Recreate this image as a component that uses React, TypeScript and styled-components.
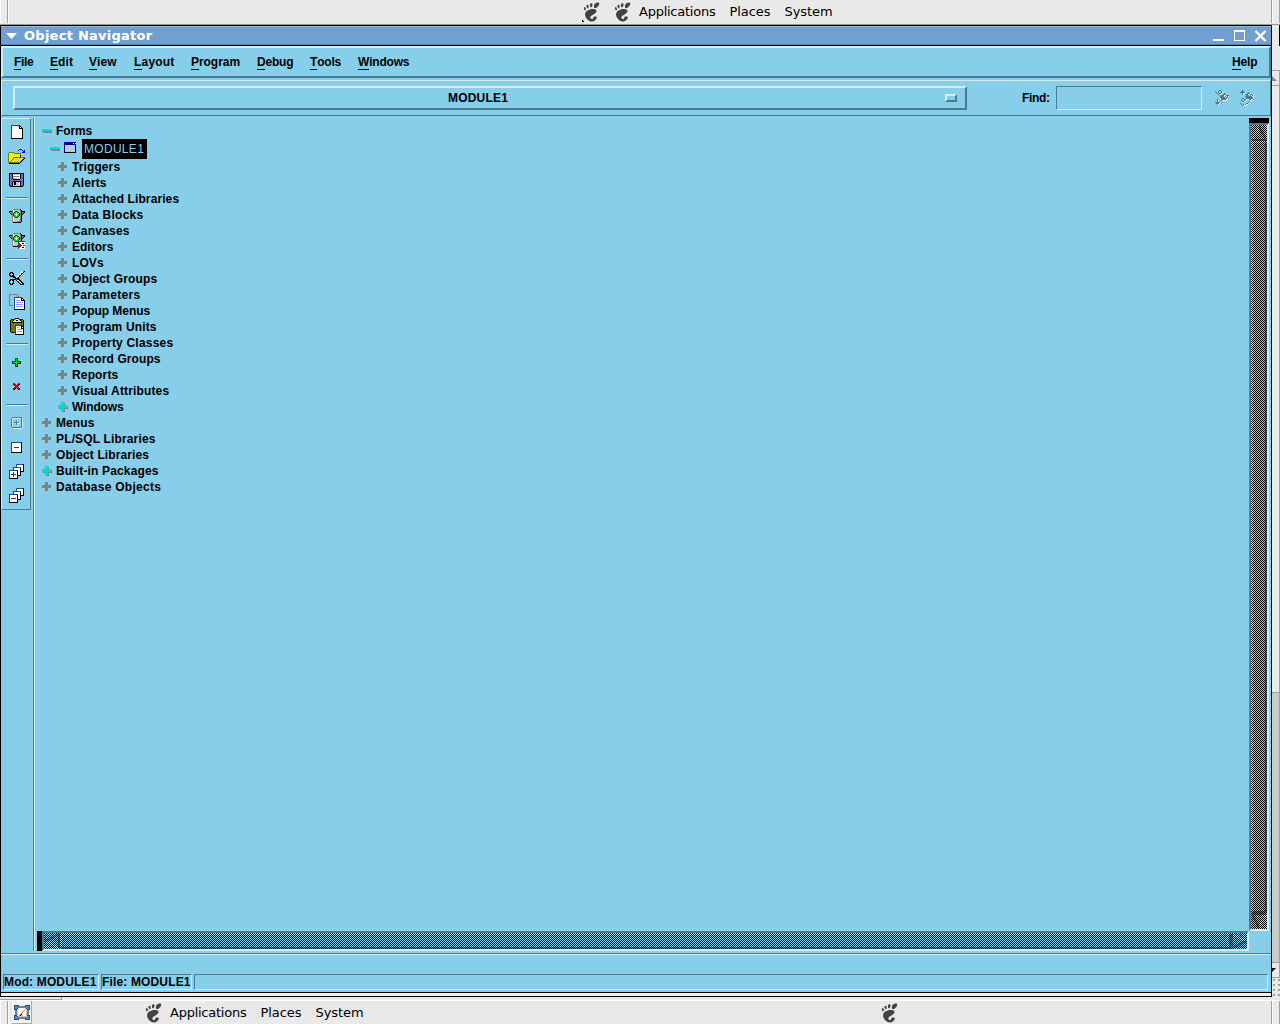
import React from "react";
import styled, { createGlobalStyle } from "styled-components";
import { SiGnome } from "react-icons/si";

const colors = {
  sky: "#87ceeb",
  light: "#d3eef9",
  dark: "#4b7b8e",
  title: "#729fcf",
  panel: "#e9e9e9",
};

const palette: Record<string, string> = {
  K: "#000000",
  W: "#ffffff",
  T: "#1c4f78",
  N: "#0000c0",
  B: "#000080",
  P: "#5c5ca4",
  p: "#8888cc",
  G: "#808080",
  g: "#c4c4cc",
  F: "#b9cbe6",
  Y: "#ffff00",
  y: "#d8d020",
  D: "#77770a",
  L: "#e0dc70",
  E: "#00e020",
  e: "#006000",
  R: "#e00000",
  r: "#700010",
  C: "#00dcdc",
  c: "#2cb0b4",
  S: colors.dark,
  H: colors.light,
  V: "#9090ff",
  U: "#5020a0",
  O: "#e08a20",
  A: "#5b86bd",
  a: "#274b85",
};

const sprites: Record<string, string[]> = {
  create: [
    "TTTTTTTTK...",
    "TWWWWWWWKK..",
    "TWWWWWWWKWK.",
    "TWWWWWWWKKKK",
    "TWWWWWWWWWWK",
    "TWWWWWWWWWWK",
    "TWWWWWWWWWWK",
    "TWWWWWWWWWWK",
    "TWWWWWWWWWWK",
    "TWWWWWWWWWWK",
    "TWWWWWWWWWWK",
    "TWWWWWWWWWWK",
    "TWWWWWWWWWWK",
    "KKKKKKKKKKKK",
  ],
  open: [
    "...........NNN...",
    "..........N...N.N",
    "...............NN",
    ".DDDDD........NNN",
    "DYYYYYDDDDDDD....",
    "DYYYyYYYyYYYD....",
    "DYyYYYyYYYyYK....",
    "DYYYyYYYyYYYK....",
    "DYyYYDDDDDDDDDDDD",
    "DYYYyDLLyLLyLLLDK",
    "DYyYDLyLLyLLyLDK.",
    "DYYDLLLyLLyLLDK..",
    "DYDLyLLLyLLLDK...",
    "DDDDDDDDDDDDK....",
    ".KKKKKKKKKKK.....",
  ],
  save: [
    "KKKKKKKKKKKKKKK",
    "KPpKggggggWKpPK",
    "KpPKWWWWWWWKPpK",
    "KPpKGGGGGGgKpPK",
    "KpPKWWWWWWWKPpK",
    "KPpKGgggggWKpPK",
    "KpPpKKKKKKKpPpK",
    "KPpPpPpPpPpPpPK",
    "KpPPKKKKKKKKPpK",
    "KPpKgKKgggWKpPK",
    "KpPKgKKgggWKPpK",
    "KPpKgKKgggWKpPK",
    "KpPKggggggWKPpK",
    ".KKKKKKKKKKKKK.",
  ],
  run: [
    "....GGGGGGGK....",
    "...GWggggggGK...",
    "KKKGWgeeeggGKKKK",
    "KGGGgeEEEegGKGGK",
    ".KGGeEEWEEeGKGK.",
    "..KGeEWWWEeGKK..",
    "...GeEEWEEeGK...",
    "...GgeEEEegGK...",
    "...GWgeeeggGK...",
    "...GWggggggGK...",
    "...GWggggggGK...",
    "...GWggggggGK...",
    "...GggggGGGGK...",
    "....KKKKKKKK....",
  ],
  debug: [
    "....GGGGGGGK....",
    "...GWggggggGK...",
    "KKKGWgeeeggGKKKK",
    "KGGGgeEEEegGKGGK",
    ".KGGeEEWEEeGKGK.",
    "..KGeEWWWEeGKK..",
    "...GeEEWEEeGK...",
    "...GgeEEEegGK...",
    "...GWgeeeTTTTTTT",
    "...GWggggTWWWWWW",
    "...GWggggTRWWKKW",
    "...GWggggTRRWWWW",
    "...GggggGTRRRWRR",
    "....KKKKKTRRWWWW",
    ".........TRWWKKW",
    ".........TWWWWWW",
  ],
  cut: [
    ".............WPK",
    ".KKK........WWK.",
    "KK.KK......WPK..",
    "K...K.....WWK...",
    "KK.KK....WPK....",
    ".KKKKK..WWK.....",
    "....KKKWPK......",
    "......KKKK......",
    ".KKKKKKPPKK.....",
    "KK.KK..KWWKK....",
    "K...K...KPWKK...",
    "K...K....KPWKK..",
    "KK.KK.....KPWKK.",
    ".KKK.......KKKK.",
  ],
  copy: [
    "GGGGGGGGG.......",
    "G.......G.......",
    "G.......GG......",
    "G....TTTTTTTT...",
    "G....TWWWWWWKK..",
    "G....TWWWWWWKWK.",
    "G....TWVVVVWKKKK",
    "G....TWWWWWWWWWK",
    "G....TWVVVVVVVWK",
    "G....TWWWWWWWWWK",
    "G....TWVVVVVVVWK",
    "GGGG.TWWWWWWWWWK",
    ".....TWVVVVVVVWK",
    ".....TWWWWWWWWWK",
    ".....TWWWWWWWWWK",
    ".....KKKKKKKKKKK",
  ],
  paste: [
    ".....KKKK.....",
    ".KKKKYWWYKKKK.",
    "KDDKYYKKYYKDDK",
    "KDKYWYYYYWYKDK",
    "KDKKKKKKKKKKDK",
    "KDDDDDDDDDDDDK",
    "KDDDDDDDDDDDDK",
    "KDDDDTTTTTTKDK",
    "KDDDDTWWWWWKKK",
    "KDDDDTWVVWWKWK",
    "KDDDDTWWWWWKKK",
    "KDDDDTWVVVVVWK",
    "KDDDDTWWWWWWWK",
    "KDDDDTWVVVVVWK",
    ".KKKKTWWWWWWWK",
    ".....TWWWWWWWK",
    ".....KKKKKKKKK",
  ],
  add: [
    "...eee...",
    "...eEe...",
    "...eEe...",
    "eeeeEeeee",
    "eEEEEEEEK",
    "eeeeEKKKK",
    "...eEK...",
    "...eEK...",
    "...eKK...",
  ],
  remove: [
    "RR...RR",
    "rRR.RRK",
    ".rRRRK.",
    "..RRR..",
    ".RRRRR.",
    "RRK.rRR",
    "rK...rK",
  ],
  expand: [
    ".SSSSSSSSSS.",
    "SHHHHHHHHHSH",
    "SH........SH",
    "SH...SH...SH",
    "SH...SH...SH",
    "SH.SSSSSH.SH",
    "SH..HSHHH.SH",
    "SH...SH...SH",
    "SH....H...SH",
    "SH........SH",
    ".SSSSSSSSSSH",
    "..HHHHHHHHH.",
  ],
  collapse: [
    "TTTTTTTTTTK",
    "TWWWWWWWWWK",
    "TWWWWWWWWWK",
    "TWWWWWWWWWK",
    "TWWWWWWWWWK",
    "TWWUUUUUWWK",
    "TWWWWWWWWWK",
    "TWWWWWWWWWK",
    "TWWWWWWWWWK",
    "TWWWWWWWWWK",
    "KKKKKKKKKKK",
  ],
  expandAll: [
    ".......TTTTTTTK",
    ".......TWWWWWWK",
    ".......TWWWWWWK",
    "....TTTTTTTTWWK",
    "....TWWWWWWKWWK",
    "....TWWWWWWKWWK",
    "TTTTTTTTTWWKWWK",
    "TWWWWWWWKWWKKKK",
    "TWWWUWWWKWWK...",
    "TWWWUWWWKWWK...",
    "TWUUUUUWKWWK...",
    "TWWWUWWWKKKK...",
    "TWWWUWWWK......",
    "TWWWWWWWK......",
    "KKKKKKKKK......",
  ],
  collapseAll: [
    ".......TTTTTTTK",
    ".......TWWWWWWK",
    ".......TWWWWWWK",
    "....TTTTTTTTWWK",
    "....TWWWWWWKWWK",
    "....TWWWWWWKWWK",
    "TTTTTTTTTWWKWWK",
    "TWWWWWWWKWWKKKK",
    "TWWWWWWWKWWK...",
    "TWWWWWWWKWWK...",
    "TWUUUUUWKWWK...",
    "TWWWWWWWKKKK...",
    "TWWWWWWWK......",
    "TWWWWWWWK......",
    "KKKKKKKKK......",
  ],
  findNext: [
    "....SS........",
    "S..S..S.......",
    ".S.S..SH......",
    "..S.SSH..S....",
    "...SHH..SSSH..",
    "....S.SSSHHSSS",
    ".....SSSSHSHSH",
    ".....SSSSSHSSH",
    ".....HSSSSSSH.",
    "..S...SSSSSHH.",
    "..SH..SHHHHH..",
    "..SH.SH.......",
    "SSSSSH.S......",
    ".SSSHHSH......",
    "..SH..........",
    "...H..........",
  ],
  findPrev: [
    "..S...........",
    ".SSS..........",
    "SSSSS...S.....",
    "..SHHH.SSSH...",
    "..SH.SSSHHSS..",
    "......SSSHSHS.",
    ".....SSSSSSSHH",
    "......SSSSSSSH",
    "..SS..SSSSSSSH",
    ".S..SSHHHSSHHS",
    ".S..SH....HH.H",
    "..SSH....SH...",
    "........SH....",
    "S.....SSH.....",
    ".S.S.SHH......",
    "..S.HHH.......",
  ],
  plus: [
    "...GGG...",
    "...GGG...",
    "...GGG...",
    "GGGGGGGGG",
    "GGGGGGGGG",
    "GGGGGGGGG",
    "...GGG...",
    "...GGG...",
    "...GGG...",
    ".........",
  ],
  plusActive: [
    "...CCC....",
    "...CCCG...",
    "...CCCG...",
    "CCCCCCCCC.",
    "CCCCCCCCCG",
    "CCCCCCCCCG",
    ".GGCCCGGGG",
    "...CCCG...",
    "...CCCG...",
    "....GGG...",
  ],
  minus: ["CCCCCCCCC.", "CCCCCCCCCG", "cccccccccG", ".GGGGGGGGG"],
  form: [
    "NNNNNNNNNNNN",
    "NNNNNNNNNWNW",
    "BBBBBBBBBBBB",
    "BFFFFFFFFFFK",
    "BFFFFFFFFFFK",
    "BFFFFFFFFFFK",
    "BFFFFFFFFFFK",
    "BFFFFFFFFFFK",
    "BFFFFFFFFFFK",
    "BFFFFFFFFFFK",
    "BKKKKKKKKKKK",
  ],
  desktop: [
    "aaaaa......aaaaa",
    "aAAAaGGGGGGaAAAa",
    "aAAAAAAAAAAAAAAa",
    "aAAagWWWWWWYaAAa",
    "aaagWWWWWWYOWaaa",
    ".GAgWWWWWYOWgAG.",
    ".GAgWWWWYOWWgAG.",
    ".GAgWWWYOWWWgAG.",
    ".GAgWWYOWWWWgAG.",
    ".GAgWYOKWWWWgAG.",
    "aaagWOKggWWWgaaa",
    "aAAagggggggggAAa",
    "aAAAAAAAAAAAAAAa",
    "aAAAaGGGGGGaAAAa",
    "aaaaa......aaaaa",
  ],
};

type SpriteProps = {
  name: string;
};

// Draws one svg cell for every pixel of the named sprite.
const Sprite: React.FunctionComponent<SpriteProps> = ({ name }) => {
  const rows = sprites[name];
  const width = Math.max(...rows.map((row) => row.length));
  return (
    <Styled.Svg
      width={width}
      height={rows.length}
      viewBox={`0 0 ${width} ${rows.length}`}
      shapeRendering="crispEdges"
    >
      {rows.map((row, y) =>
        row.split("").map((key, x) =>
          key === "." ? null : (
            <rect key={`${x}-${y}`} x={x} y={y} width={1} height={1} fill={palette[key]} />
          )
        )
      )}
    </Styled.Svg>
  );
};

type MenuEntry = { label: string; width: number; spacing?: number };

const menus: MenuEntry[] = [
  { label: "File", width: 36, spacing: -0.3 },
  { label: "Edit", width: 39 },
  { label: "View", width: 45 },
  { label: "Layout", width: 57, spacing: 0.2 },
  { label: "Program", width: 66, spacing: -0.05 },
  { label: "Debug", width: 53, spacing: -0.2 },
  { label: "Tools", width: 48, spacing: -0.2 },
  { label: "Windows", width: 60, spacing: -0.2 },
];

type Tool = { icon: string; height?: number } | { gap: [number, number] };

const tools: Tool[] = [
  { icon: "create" },
  { icon: "open" },
  { icon: "save" },
  { gap: [5, 5] },
  { icon: "run" },
  { icon: "debug", height: 26 },
  { gap: [4, 6] },
  { icon: "cut" },
  { icon: "copy" },
  { icon: "paste" },
  { gap: [5, 5] },
  { icon: "add" },
  { icon: "remove" },
  { gap: [6, 5] },
  { icon: "expand" },
  { icon: "collapse" },
  { icon: "expandAll" },
  { icon: "collapseAll" },
];

type TreeNode = { label: string; level: number; icon?: string; spacing?: number };

const nodes: TreeNode[] = [
  { label: "Triggers", level: 2 },
  { label: "Alerts", level: 2 },
  { label: "Attached Libraries", level: 2 },
  { label: "Data Blocks", level: 2, spacing: 0.25 },
  { label: "Canvases", level: 2, spacing: 0.2 },
  { label: "Editors", level: 2, spacing: 0 },
  { label: "LOVs", level: 2 },
  { label: "Object Groups", level: 2, spacing: 0.15 },
  { label: "Parameters", level: 2, spacing: 0.3 },
  { label: "Popup Menus", level: 2, spacing: -0.05 },
  { label: "Program Units", level: 2, spacing: 0.15 },
  { label: "Property Classes", level: 2, spacing: 0.2 },
  { label: "Record Groups", level: 2 },
  { label: "Reports", level: 2, spacing: 0.15 },
  { label: "Visual Attributes", level: 2, spacing: 0.15 },
  { label: "Windows", level: 2, icon: "plusActive", spacing: -0.15 },
  { label: "Menus", level: 0 },
  { label: "PL/SQL Libraries", level: 0, spacing: 0.15 },
  { label: "Object Libraries", level: 0 },
  { label: "Built-in Packages", level: 0, icon: "plusActive", spacing: 0.15 },
  { label: "Database Objects", level: 0, spacing: 0.28 },
];

const PanelMenu: React.FunctionComponent = () => (
  <Styled.PanelMenu>
    <Styled.Foot />
    <span>Applications</span>
    <span>Places</span>
    <span>System</span>
  </Styled.PanelMenu>
);

const ToolBox: React.FunctionComponent = () => (
  <Styled.ToolBox>
    {tools.map((tool, index) =>
      "gap" in tool ? (
        <Styled.ToolSeparator key={index} $before={tool.gap[0]} $after={tool.gap[1]} />
      ) : (
        <Styled.ToolButton key={index} $height={tool.height}>
          <Sprite name={tool.icon} />
        </Styled.ToolButton>
      )
    )}
  </Styled.ToolBox>
);

const Tree: React.FunctionComponent = () => (
  <Styled.Tree>
    <Styled.TreeRow $level={0} $spacing={-0.1}>
      <Styled.Toggle>
        <Sprite name="minus" />
      </Styled.Toggle>
      Forms
    </Styled.TreeRow>
    <Styled.TreeRow $level={1} $tall>
      <Styled.Toggle>
        <Sprite name="minus" />
      </Styled.Toggle>
      <Styled.FormIcon>
        <Sprite name="form" />
      </Styled.FormIcon>
      <Styled.Selected>MODULE1</Styled.Selected>
    </Styled.TreeRow>
    {nodes.map((node) => (
      <Styled.TreeRow key={node.label} $level={node.level} $spacing={node.spacing}>
        <Styled.Toggle>
          <Sprite name={node.icon || "plus"} />
        </Styled.Toggle>
        {node.label}
      </Styled.TreeRow>
    ))}
  </Styled.Tree>
);

type ArrowProps = {
  angle: number;
};

const Arrow: React.FunctionComponent<ArrowProps> = ({ angle }) => (
  <Styled.Svg width={16} height={16} viewBox="0 0 16 16">
    <g transform={`rotate(${angle} 8 8)`} fill="none" strokeWidth={2}>
      <path d="M1 15L8 1" stroke={colors.light} />
      <path d="M8 1L15 15H1" stroke={colors.dark} />
    </g>
  </Styled.Svg>
);

const App: React.FunctionComponent = () => (
  <Styled.Desktop>
    <GlobalStyle />
    <Styled.Panel $height={25} $edge>
      <Styled.Handle />
      <Styled.PanelSpace $width={573} />
      <Styled.Foot $corner />
      <Styled.PanelSpace $width={12} />
      <PanelMenu />
      <Styled.PanelEnd />
    </Styled.Panel>
    <Styled.Workspace>
      <Styled.Window>
        <Styled.TitleBar>
          <Styled.Svg width={11} height={6} viewBox="0 0 11 6">
            <path d="M0 0H11L5.5 6Z" fill="#fff" />
          </Styled.Svg>
          <Styled.Title>Object Navigator</Styled.Title>
          <Styled.Svg width={54} height={12} viewBox="0 0 54 12" shapeRendering="crispEdges">
            <path d="M0 9H11V11H0Z" fill="#fff" />
            <path d="M21 0H32V11H21ZM22 2V10H31V2Z" fill="#fff" fillRule="evenodd" />
            <path
              d="M42.5 1L52.5 11M52.5 1L42.5 11"
              stroke="#fff"
              strokeWidth={2.4}
              shapeRendering="auto"
            />
          </Styled.Svg>
        </Styled.TitleBar>
        <Styled.MenuBar>
          {menus.map((menu) => (
            <Styled.MenuItem key={menu.label} $width={menu.width} $spacing={menu.spacing}>
              <Styled.Mnemonic>{menu.label[0]}</Styled.Mnemonic>
              {menu.label.slice(1)}
            </Styled.MenuItem>
          ))}
          <Styled.HelpItem $width={26}>
            <Styled.Mnemonic>H</Styled.Mnemonic>elp
          </Styled.HelpItem>
        </Styled.MenuBar>
        <Styled.SearchBar>
          <Styled.OptionMenu>
            <Styled.OptionLabel>MODULE1</Styled.OptionLabel>
            <Styled.OptionMark />
          </Styled.OptionMenu>
          <Styled.FindLabel>Find:</Styled.FindLabel>
          <Styled.FindInput />
          <Styled.FindButtons>
            <Sprite name="findNext" />
            <Sprite name="findPrev" />
          </Styled.FindButtons>
        </Styled.SearchBar>
        <Styled.Body>
          <ToolBox />
          <Styled.Divider />
          <Styled.TreePane>
            <Tree />
            <Styled.HorizontalBar>
              <Styled.BarCap $width={5} />
              <Styled.Trough>
                <Arrow angle={-90} />
                <Styled.Thumb />
                <Arrow angle={90} />
              </Styled.Trough>
            </Styled.HorizontalBar>
          </Styled.TreePane>
          <Styled.VerticalBar>
            <Styled.BarCap $height={5} />
            <Styled.Trough $vertical>
              <Arrow angle={0} />
              <Styled.Thumb />
              <Arrow angle={180} />
            </Styled.Trough>
          </Styled.VerticalBar>
        </Styled.Body>
        <Styled.StatusBar>
          <Styled.StatusCell $width={96}>Mod: MODULE1</Styled.StatusCell>
          <Styled.StatusCell $width={91}>File: MODULE1</Styled.StatusCell>
          <Styled.StatusCell />
        </Styled.StatusBar>
        <Styled.WindowFoot />
      </Styled.Window>
      <Styled.Behind>
        <Styled.BehindTitle />
        <Styled.BehindMenu />
        <Styled.BehindArrow $height={15}>
          <svg width={7} height={5}>
            <path d="M0 0L5 5H0Z" fill="#888" />
          </svg>
        </Styled.BehindArrow>
        <Styled.BehindTrough />
        <Styled.BehindThumb />
        <Styled.BehindArrow $height={15}>
          <svg width={7} height={5}>
            <path d="M0 0H4L0 4Z" fill="#000" />
          </svg>
        </Styled.BehindArrow>
        <Styled.BehindGrip />
      </Styled.Behind>
    </Styled.Workspace>
    <Styled.BehindFoot />
    <Styled.Panel $height={24}>
      <Styled.Handle />
      <Styled.ShowDesktop>
        <Sprite name="desktop" />
      </Styled.ShowDesktop>
      <Styled.PanelSpace $width={112} />
      <PanelMenu />
      <Styled.PanelSpace $width={516} />
      <Styled.Foot />
      <Styled.PanelEnd />
    </Styled.Panel>
  </Styled.Desktop>
);

const GlobalStyle = createGlobalStyle`
  body {
    margin: 0;
    overflow: hidden;
    background: ${colors.panel};
  }
`;

const Styled = {
  Svg: styled.svg`
    display: block;
    flex: none;
  `,
  Desktop: styled.div`
    display: flex;
    flex-direction: column;
    width: 1280px;
    height: 1024px;
    overflow: hidden;
    background: ${colors.panel};
    font: bold 12px/16px "Liberation Sans", Arial, sans-serif;
    color: #000;
    white-space: nowrap;
  `,
  Panel: styled.div<{ $height: number; $edge?: boolean }>`
    display: flex;
    flex: none;
    align-items: center;
    box-sizing: border-box;
    height: ${({ $height }) => $height}px;
    padding-bottom: ${({ $edge }) => ($edge ? 1 : 0)}px;
    background: ${colors.panel};
    border-top: ${({ $edge }) => ($edge ? "none" : "1px solid #fff")};
    border-bottom: ${({ $edge }) => ($edge ? "1px solid #999990" : "none")};
  `,
  Handle: styled.div`
    align-self: stretch;
    flex: none;
    box-sizing: border-box;
    width: 9px;
    border-left: 1px solid #fff;
    border-right: 1px solid #fff;
    box-shadow: inset -1px 0 #a0a09c;
  `,
  PanelSpace: styled.div<{ $width: number }>`
    flex: none;
    width: ${({ $width }) => $width}px;
  `,
  PanelMenu: styled.div`
    display: flex;
    align-items: center;
    gap: 14px;
    font: 13px/20px "DejaVu Sans", sans-serif;
    letter-spacing: -0.25px;

    span + span {
      letter-spacing: -0.05px;
    }

    svg {
      margin-right: -7px;
    }
  `,
  Foot: styled(SiGnome)<{ $corner?: boolean }>`
    flex: none;
    width: 19px;
    height: 20px;
    color: #3f4443;
    background: ${({ $corner }) =>
      $corner ? "linear-gradient(45deg, #000 2px, transparent 2px)" : "none"};
  `,
  PanelEnd: styled.div`
    align-self: stretch;
    width: 7px;
    margin-left: auto;
    border-left: 1px solid #a0a09c;
    border-right: 1px solid #a0a09c;
    box-shadow: inset 1px 0 #fff;
  `,
  ShowDesktop: styled.div`
    display: flex;
    align-self: stretch;
    align-items: center;
    justify-content: center;
    box-sizing: border-box;
    width: 20px;
    margin-left: 3px;
    background: #f4f4f3;
    border-right: 1px solid #a8a8a4;
    border-bottom: 1px solid #a8a8a4;
  `,
  Workspace: styled.div`
    display: flex;
    flex: none;
    height: 972px;
  `,
  Window: styled.div`
    display: flex;
    flex-direction: column;
    box-sizing: border-box;
    width: 1272px;
    border: 1px solid #000;
    background: ${colors.sky};
  `,
  TitleBar: styled.div`
    display: flex;
    align-items: center;
    box-sizing: border-box;
    height: 20px;
    padding: 0 4px 0 5px;
    background: ${colors.title};
    border-top: 1px solid #94b7dc;
    border-bottom: 1px solid #000;
    box-shadow: inset 0 -1px #5b82b4;
  `,
  Title: styled.div`
    flex: 1;
    padding-left: 7px;
    font: bold 13px/18px "DejaVu Sans", sans-serif;
    letter-spacing: 0.26px;
    color: #fff;
  `,
  MenuBar: styled.div`
    display: flex;
    align-items: center;
    box-sizing: border-box;
    height: 32px;
    padding: 0 11px;
    border: 2px solid;
    border-color: ${colors.light} ${colors.dark} ${colors.dark} ${colors.light};
  `,
  MenuItem: styled.div<{ $width: number; $spacing?: number }>`
    flex: none;
    width: ${({ $width }) => $width}px;
    letter-spacing: ${({ $spacing = 0.1 }) => $spacing}px;
  `,
  HelpItem: styled.div<{ $width: number }>`
    width: ${({ $width }) => $width}px;
    margin-left: auto;
    letter-spacing: -0.15px;
  `,
  Mnemonic: styled.span`
    display: inline-block;
    height: 15px;
    border-bottom: 1px solid #000;
  `,
  SearchBar: styled.div`
    display: flex;
    align-items: center;
    box-sizing: border-box;
    height: 36px;
    margin-top: 2px;
    padding-left: 11px;
    border: 1px solid;
    border-color: ${colors.light} ${colors.dark} ${colors.dark} ${colors.light};
  `,
  OptionMenu: styled.div`
    display: flex;
    align-items: center;
    box-sizing: border-box;
    width: 954px;
    height: 24px;
    padding-right: 8px;
    border: 2px solid;
    border-color: ${colors.light} ${colors.dark} ${colors.dark} ${colors.light};
  `,
  OptionLabel: styled.div`
    flex: 1;
    padding-right: 4px;
    text-align: center;
    letter-spacing: 0.2px;
  `,
  OptionMark: styled.div`
    box-sizing: border-box;
    width: 12px;
    height: 8px;
    border: 2px solid;
    border-color: ${colors.light} ${colors.dark} ${colors.dark} ${colors.light};
  `,
  FindLabel: styled.div`
    width: 34px;
    margin-left: 55px;
    letter-spacing: -0.3px;
  `,
  FindInput: styled.div`
    box-sizing: border-box;
    width: 146px;
    height: 24px;
    border: 1px solid;
    border-color: ${colors.dark} ${colors.light} ${colors.light} ${colors.dark};
  `,
  FindButtons: styled.div`
    display: flex;
    gap: 11px;
    margin-left: 13px;
  `,
  Body: styled.div`
    display: flex;
    height: 833px;
    margin-top: 2px;
  `,
  ToolBox: styled.div`
    align-self: flex-start;
    box-sizing: border-box;
    width: 30px;
    height: 392px;
    padding-top: 1px;
    border: 1px solid;
    border-color: ${colors.light} ${colors.dark} ${colors.dark} ${colors.light};
  `,
  ToolButton: styled.div<{ $height?: number }>`
    display: flex;
    align-items: center;
    justify-content: center;
    height: ${({ $height }) => $height || 24}px;
    padding-left: 1px;
  `,
  ToolSeparator: styled.div<{ $before: number; $after: number }>`
    height: 1px;
    margin: ${({ $before, $after }) => `${$before}px 2px ${$after}px 4px`};
    background: ${colors.dark};
    border-bottom: 1px solid ${colors.light};
  `,
  Divider: styled.div`
    width: 1px;
    margin-left: 2px;
    background: ${colors.dark};
    border-right: 1px solid ${colors.light};
  `,
  TreePane: styled.div`
    display: flex;
    flex: 1;
    flex-direction: column;
    padding-left: 2px;
  `,
  Tree: styled.div`
    flex: 1;
    padding: 5px 0 0 5px;
  `,
  TreeRow: styled.div<{ $level: number; $tall?: boolean; $spacing?: number }>`
    display: flex;
    align-items: center;
    height: ${({ $tall }) => ($tall ? 20 : 16)}px;
    padding-left: ${({ $level }) => $level * 8}px;
    letter-spacing: ${({ $spacing = 0.1 }) => $spacing}px;
  `,
  Toggle: styled.div`
    width: 14px;
  `,
  FormIcon: styled.div`
    width: 18px;
    padding-bottom: 3px;
  `,
  Selected: styled.div`
    box-sizing: border-box;
    width: 65px;
    height: 20px;
    padding-left: 2px;
    line-height: 20px;
    font-weight: normal;
    letter-spacing: 0.3px;
    background: #000;
    color: ${colors.sky};
  `,
  HorizontalBar: styled.div`
    display: flex;
    height: 20px;
  `,
  VerticalBar: styled.div`
    display: flex;
    flex-direction: column;
    width: 20px;
    height: 813px;
    margin-right: 2px;
  `,
  BarCap: styled.div<{ $width?: number; $height?: number }>`
    flex: none;
    width: ${({ $width }) => ($width ? `${$width}px` : "auto")};
    height: ${({ $height }) => ($height ? `${$height}px` : "auto")};
    background: #000;
  `,
  // The stipple over the whole trough marks the scroll bar as disabled.
  Trough: styled.div<{ $vertical?: boolean }>`
    position: relative;
    display: flex;
    flex: 1;
    flex-direction: ${({ $vertical }) => ($vertical ? "column" : "row")};
    border: 2px solid;
    border-color: ${colors.dark} ${colors.light} ${colors.light} ${colors.dark};

    &::after {
      content: "";
      position: absolute;
      inset: 0;
      background: repeating-conic-gradient(#000 0 25%, transparent 0 50%) 1px 0 / 2px 2px;
    }
  `,
  Thumb: styled.div`
    flex: 1;
    border: 2px solid;
    border-color: ${colors.light} ${colors.dark} ${colors.dark} ${colors.light};
  `,
  StatusBar: styled.div`
    display: flex;
    gap: 2px;
    height: 16px;
    margin-top: 2px;
    padding: 20px 3px 2px 2px;
    border-top: 1px solid ${colors.dark};
    box-shadow: inset 0 1px ${colors.light};
  `,
  StatusCell: styled.div<{ $width?: number }>`
    flex: ${({ $width }) => ($width ? "none" : 1)};
    box-sizing: border-box;
    width: ${({ $width }) => ($width ? `${$width}px` : "auto")};
    border: 1px solid;
    border-color: ${colors.dark} ${colors.light} ${colors.light} ${colors.dark};
    line-height: 14px;
    letter-spacing: 0.15px;
  `,
  WindowFoot: styled.div`
    flex: 1;
    border-top: 1px solid #000;
    background: #eeeeec;
  `,
  Behind: styled.div`
    display: flex;
    flex: 1;
    flex-direction: column;
    background: ${colors.panel};
  `,
  BehindTitle: styled.div`
    height: 21px;
    border-right: 1px solid #000;
  `,
  BehindMenu: styled.div`
    height: 24px;
    border-bottom: 1px solid #a0a09c;
  `,
  BehindArrow: styled.div<{ $height: number }>`
    display: flex;
    align-items: center;
    box-sizing: border-box;
    height: ${({ $height }) => $height}px;
    border-right: 1px solid #a0a09c;
    border-bottom: 1px solid #a0a09c;
  `,
  BehindTrough: styled.div`
    height: 606px;
    border-right: 1px solid #a0a09c;
    border-bottom: 1px solid #a0a09c;
    background: #ebebeb;
  `,
  BehindThumb: styled.div`
    height: 269px;
    border-right: 1px solid #a0a09c;
    border-bottom: 1px solid #a0a09c;
    background: #cbcbcb;
  `,
  BehindGrip: styled.div`
    flex: 1;
    background: radial-gradient(circle at 2px 2px, #a0a09c 1px, transparent 1.5px) 0 0 / 5px 5px;
  `,
  BehindFoot: styled.div`
    flex: none;
    box-sizing: border-box;
    width: 62px;
    height: 3px;
    border-right: 1px solid #a0a09c;
    border-bottom: 1px solid #a0a09c;
  `,
};

export default App;
